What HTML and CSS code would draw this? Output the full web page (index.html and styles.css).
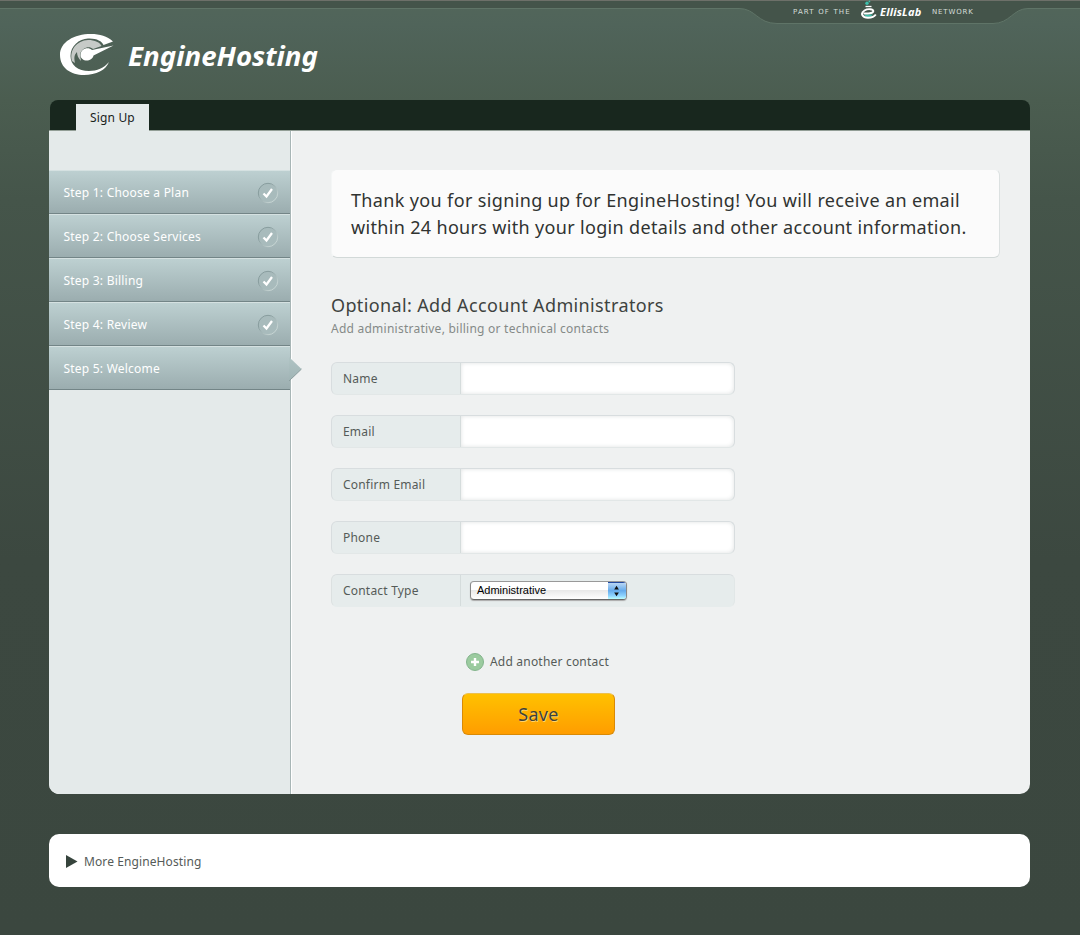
FILE: index.html
```html
<!DOCTYPE html>
<html lang="en">
<head>
<meta charset="utf-8">
<title>EngineHosting – Sign Up</title>
<link rel="stylesheet" href="styles.css">
</head>
<body>
<div class="network">
  <svg class="network-shape" width="1080" height="26" viewBox="0 0 1080 26">
    <path d="M0 0H1080V8.500H1028C1013 8.500 1010 23.500 993 23.500H777C757 23.500 756 8.500 739 8.500H0Z" fill="#44544a"/>
    <path d="M0 8.500H739C756 8.500 757 23.500 777 23.500H993C1010 23.500 1013 8.500 1028 8.500H1080" fill="none" stroke="#5f7467"/>
    <path d="M0 .5H1080" stroke="#6d7069"/>
  </svg>
  <div class="network-row">
    <span class="tiny part">PART OF THE</span>
    <svg class="flask" width="18" height="20" viewBox="0 0 18 20">
      <circle cx="7" cy="3.300" r="1.700" fill="#3fc1ad"/><circle cx="9.400" cy="1.400" r=".9" fill="#3fc1ad"/>
      <path d="M5.500 6.500H11.500" stroke="#fff" stroke-width="1.300"/>
      <path d="M4 14.500H13Q11 17 8 17T4 14.500" fill="#3fc1ad"/>
      <path d="M3.500 13.300C8 13.800 13 13.200 13.300 11.300C13.500 9 8 8.300 4.500 10.500C-.3 13.500 2.500 17.700 8 17.700C12 17.700 14.500 16.500 15.800 14.500" fill="none" stroke="#fff" stroke-width="1.900"/>
    </svg>
    <span class="ellis">EllisLab</span>
    <span class="tiny">NETWORK</span>
  </div>
</div>
<header class="header">
  <svg width="270" height="50" viewBox="0 0 270 50">
    <path d="M53 11.500C47 6 40 4 31 4C14 4 0 12 0 25C0 38 11 45 24 45C36 45 46 40 49 32C44 38 37 41 29 41C18 41 10.500 35 10.500 26C10.500 16 19 9 28 8.500C36 8 42 11 43.500 15Z" fill="#fff"/>
    <path d="M12 31C9 20 17 10.500 28 10C35 10 40 12.500 41.500 16L33 19C29 15 22 18 20 24L21 31C18 28 17 25 17 22C14 25 14 28 15 33Z" fill="#c6cac7"/>
    <path d="M53.500 15.500L32 20C28 16 20.500 19 20.500 25C20.500 32 32 32.500 33.500 25.500Z" fill="#fff"/>
    <text class="logo-text" x="68" y="36" textLength="190" lengthAdjust="spacingAndGlyphs">EngineHosting</text>
  </svg>
</header>
<main class="panel">
  <nav class="tabs"><a class="tab">Sign Up</a></nav>
  <div class="body">
    <aside class="side">
      <div class="step">Step 1: Choose a Plan<svg class="check" viewBox="0 0 22 22"><use href="#tick"/></svg></div>
      <div class="step">Step 2: Choose Services<svg class="check" viewBox="0 0 22 22"><use href="#tick"/></svg></div>
      <div class="step">Step 3: Billing<svg class="check" viewBox="0 0 22 22"><use href="#tick"/></svg></div>
      <div class="step">Step 4: Review<svg class="check" viewBox="0 0 22 22"><use href="#tick"/></svg></div>
      <div class="step">Step 5: Welcome<svg class="arrow" width="13" height="26" viewBox="0 0 13 26"><path d="M0 1L12.500 13L0 25Z" fill="url(#arrow-fill)"/><path d="M0 25L12.500 13" stroke="#8b9d9e" fill="none"/></svg></div>
    </aside>
    <section class="content">
      <div class="notice">
        <div class="line1">Thank you for signing up for EngineHosting! You will receive an email</div>
        <div class="line2">within 24 hours with your login details and other account information.</div>
      </div>
      <h2>Optional: Add Account Administrators</h2>
      <p class="hint">Add administrative, billing or technical contacts</p>
      <form class="form">
        <label class="field"><span class="label">Name</span><input type="text"></label>
        <label class="field"><span class="label">Email</span><input type="text"></label>
        <label class="field"><span class="label">Confirm Email</span><input type="text"></label>
        <label class="field"><span class="label">Phone</span><input type="text"></label>
        <div class="field choice"><span class="label">Contact Type</span>
          <span class="select"><span class="value">Administrative</span>
            <svg width="18" height="17" viewBox="0 0 18 17"><path d="M6 7L8.500 3L11 7ZM6 10L8.500 14L11 10Z" fill="#111"/></svg>
          </span>
        </div>
        <a class="add"><svg width="18" height="18" viewBox="0 0 18 18"><circle cx="9" cy="9" r="8.500" fill="#9bcb9f" stroke="#83b48c"/><path d="M9 5V13M5 9H13" stroke="#fff" stroke-width="2.400"/></svg><span>Add another contact</span></a>
        <button class="save" type="button">Save</button>
      </form>
    </section>
  </div>
</main>
<footer class="more"><svg width="12" height="13" viewBox="0 0 12 13"><path d="M0 0L11.500 6.500L0 13Z" fill="#36443c"/></svg><span>More EngineHosting</span></footer>
<svg class="defs" width="0" height="0">
  <defs>
    <linearGradient id="arrow-fill" x1="0" y1="0" x2="0" y2="1"><stop stop-color="#b0c4c4"/><stop offset="1" stop-color="#a0b4b5"/></linearGradient>
    <linearGradient id="ring" x1="0" y1="0" x2="1" y2="1"><stop offset=".3" stop-color="#879c9d"/><stop offset=".8" stop-color="#c6d4d3"/></linearGradient>
    <g id="tick"><circle cx="11" cy="11" r="9.700" fill="#a8bbbc" stroke="url(#ring)"/><path d="M6.500 11.500L9.500 14.500L15 7" fill="none" stroke="#fff" stroke-width="2.300"/></g>
  </defs>
</svg>
</body>
</html>
```
FILE: styles.css
```css
* { box-sizing: border-box; }
body {
  margin: 0;
  height: 935px;
  overflow: hidden;
  font: 12px/16px "Noto Sans", sans-serif;
  color: #555b58;
  background: linear-gradient(#52665a 0, #50645a 25px, #4b5d50 100px, #45554a 200px, #3c4840 560px, #3b473f 100%);
}
.network { height: 26px; display: grid; }
.network-shape, .network-row { grid-area: 1 / 1; }
.network-row { display: flex; align-items: center; height: 23px; padding-left: 793px; color: #d5ded9; }
.tiny { font: 7px/10px "DejaVu Sans", sans-serif; letter-spacing: 1.15px; white-space: nowrap; }
.part { width: 67px; }
.ellis + .tiny { letter-spacing: .85px; }
.ellis { width: 52px; font: italic bold 11px/14px "Noto Sans", sans-serif; letter-spacing: .2px; color: #fff; }
.flask { width: 18px; margin: -3px 2px 0 0; }
.header { height: 74px; padding: 4px 0 0 60px; }
.logo-text { font: italic bold 27px "Noto Sans", sans-serif; fill: #fff; }
.panel { width: 981px; margin-left: 49px; }
.tabs { height: 30px; margin-left: 1px; padding: 4px 0 0 26px; background: #18271e; border-radius: 8px 8px 0 0; display: flex; }
.tab { position: relative; width: 73px; height: 27px; background: #e4eaea; color: #18221c; text-align: center; line-height: 27px; letter-spacing: .15px; }
.body { height: 664px; display: flex; background: #eff1f1; border-top: 1px solid #929e96; border-radius: 0 0 10px 10px; overflow: hidden; }
.side { width: 242px; flex: none; padding-top: 39px; background: #e4eaea; border-right: 1px solid #a8b6b6; box-shadow: 1px 0 #fff; }
.step { position: relative; height: 44px; padding: 2px 11px 0 14.500px; display: flex; align-items: center; justify-content: space-between; color: #fff; letter-spacing: .22px; background: linear-gradient(#bdd0d1, #9badaf); border-top: 1px solid #d5e1e1; border-bottom: 1px solid #738587; }
.check { width: 22px; height: 22px; }
.arrow { position: absolute; right: -12px; top: 9px; }
.content { padding: 38px 30px 0 40px; }
.notice { width: 669px; height: 89px; padding: 17px 19px; background: #fbfbfb; border: 1px solid; border-color: #eff1f1 #dce1e1 #d2d9d8 #f4f6f6; border-radius: 6px; color: #303331; font-size: 18px; line-height: 27px; white-space: nowrap; }
.line1 { letter-spacing: .36px; }
.line2 { letter-spacing: .33px; }
h2 { margin: 34px 0 0; font-size: 18px; font-weight: 400; line-height: 27px; letter-spacing: .37px; color: #3e4340; }
.hint { margin: 1px 0 0; color: #858a88; line-height: 18px; letter-spacing: .24px; }
.form { padding-top: 24px; }
.field { width: 404px; height: 33px; margin-bottom: 20px; display: flex; background: #e6ecec; border: 1px solid #d8dddf; border-bottom-color: #e2e7e7; border-radius: 6px; overflow: hidden; }
.label { width: 129px; flex: none; padding-left: 11px; line-height: 31px; border-right: 1px solid #d5dcdc; letter-spacing: .2px; }
.field input { flex: 1; min-width: 0; border: 0; padding: 0 10px; background: #fff; box-shadow: inset 0 0 4px #dfe2e2; border-radius: 0 6px 6px 0; }
.choice { align-items: center; border-color: #d8dddf #e1e7e7 #e6ecec #dce1e1; margin-bottom: 46px; }
.choice .label { line-height: 33px; }
.select { margin-left: 9px; width: 157px; height: 19px; display: flex; justify-content: space-between; border: 1px solid #777; border-color: #999 #888 #666; border-radius: 4px; background: linear-gradient(#fff 0 45%, #e9e9e9 50%, #fff); box-shadow: 0 1px 1px #aaa; overflow: hidden; }
.value { padding-left: 6px; font: 11px/17px "Liberation Sans", sans-serif; color: #000; }
.select svg { background: linear-gradient(#b9d6f4, #65abec 48%, #8fd4ff 80%, #bff); border-top: 1px solid #234aa1; }
.add { display: flex; align-items: center; gap: 6px; height: 18px; margin: 0 0 22px 135px; letter-spacing: .2px; }
.save { display: block; width: 153px; height: 42px; margin-left: 131px; padding: 0; border: 1px solid #d98a06; border-top-color: #edc04c; border-radius: 6px; background: linear-gradient(#ffc100, #ff9d00); font: 18px/38px "Noto Sans", sans-serif; letter-spacing: .3px; color: #3e423b; text-shadow: 1px 1px #ffd46d; }
.more { width: 981px; height: 53px; margin: 40px 0 0 49px; padding: 2px 0 0 16.500px; display: flex; align-items: center; gap: 6.500px; border-radius: 10px; background: #fff; letter-spacing: .1px; }
.defs { position: absolute; }
```
